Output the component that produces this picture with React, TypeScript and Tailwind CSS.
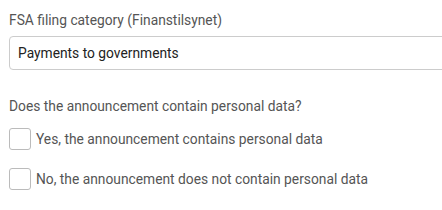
export default function App() {
  return (
    <div className="w-[442px] h-[210px] overflow-hidden bg-white font-['Roboto',sans-serif]">
      <div className="pl-[9px] pt-[10px]">
        <label className="block h-[26px] leading-[20px] text-[13.8px] text-[#555]">
          FSA filing category (Finanstilsynet)
        </label>
        <div className="-mr-4 flex h-[34px] items-center rounded-[4px] border border-[#ccc] pl-[8px] text-[13.8px] text-[#222]">
          Payments to governments
        </div>

        <p className="mt-[26px] h-[20px] leading-[20px] text-[13.8px] text-[#555]">
          Does the announcement contain personal data?
        </p>

        <div className="mt-[12px] flex flex-col gap-[18px]">
          <label className="flex items-center gap-[5px] text-[13.8px] text-[#555]">
            <span className="block h-[22px] w-[22px] rounded-[3px] border border-[#bbb] bg-white" />
            Yes, the announcement contains personal data
          </label>
          <label className="flex items-center gap-[5px] text-[13.8px] text-[#555]">
            <span className="block h-[22px] w-[22px] rounded-[3px] border border-[#bbb] bg-white" />
            No, the announcement does not contain personal data
          </label>
        </div>
      </div>
    </div>
  );
}
